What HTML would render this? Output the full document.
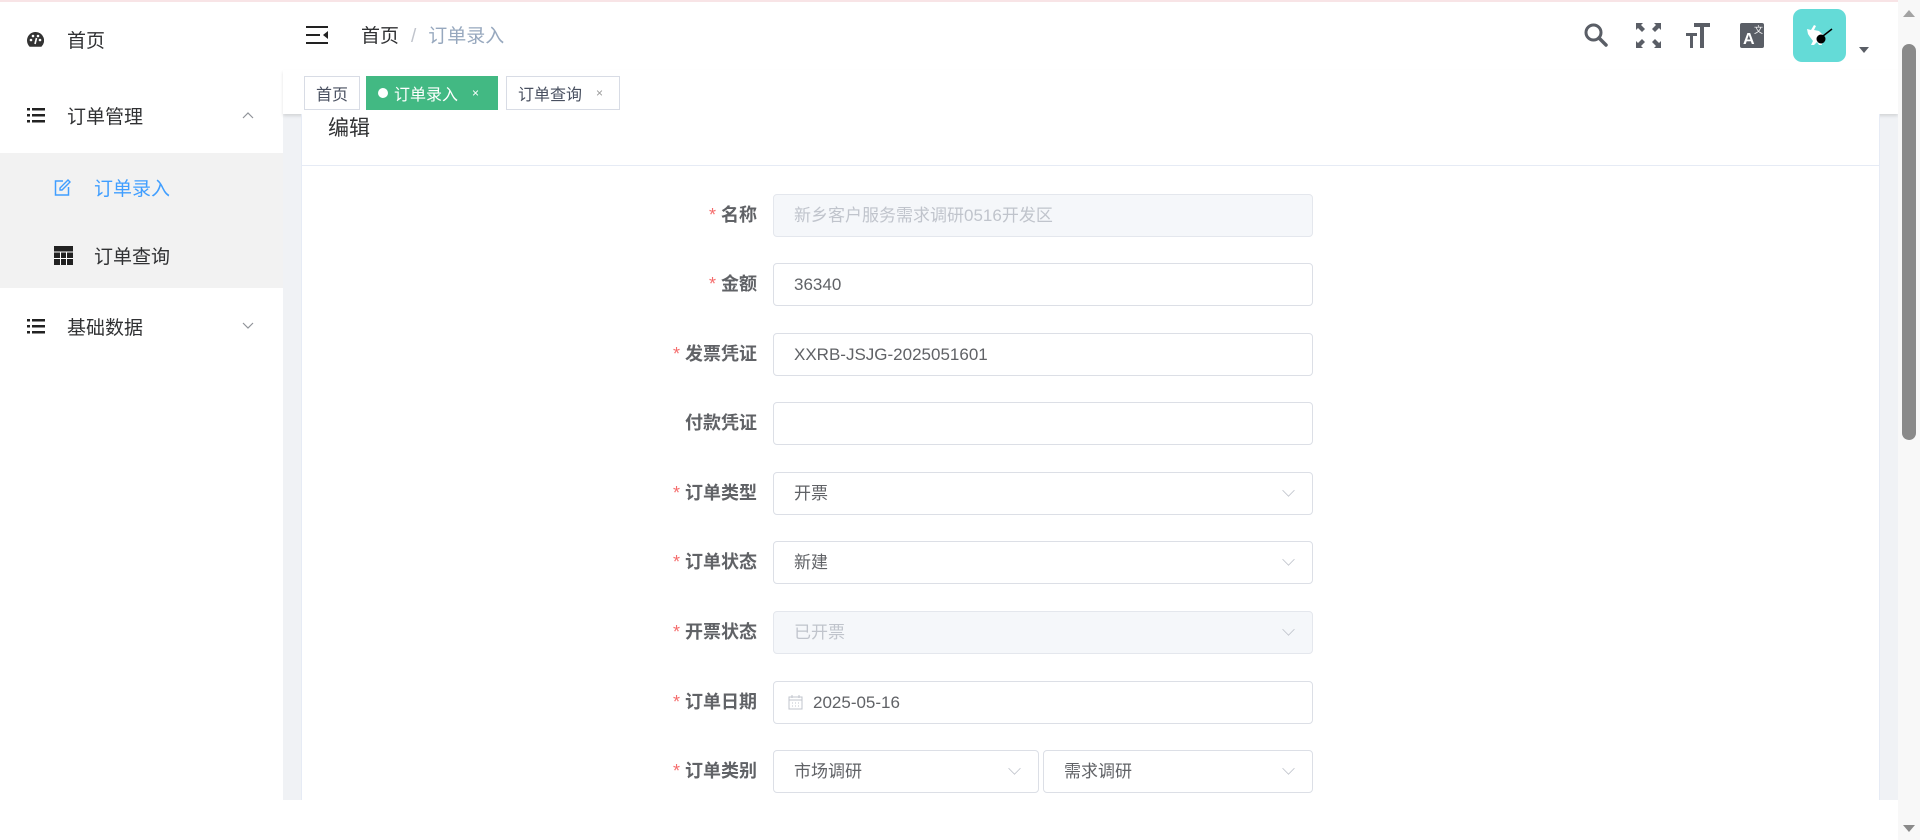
<!DOCTYPE html>
<html><head><meta charset="utf-8"><style>
*{box-sizing:border-box;margin:0;padding:0}
body{width:1920px;height:840px;overflow:hidden;background:#fff;font-family:"Liberation Sans","Noto Sans CJK SC",sans-serif;position:relative;color:#303133}
.pink{position:absolute;left:0;top:0;width:1920px;height:2px;background:#f8e4e6}
.side{position:absolute;left:0;top:2px;width:283px;height:838px;background:#fff}
.mi{position:absolute;left:0;width:283px;font-size:19px;color:#303133;display:flex;align-items:center}
.sub{position:absolute;left:0;top:151px;width:283px;height:135px;background:#f2f2f2}
.main{position:absolute;left:283px;top:2px;width:1615px;height:798px;background:#f0f2f5}
.hdr{position:absolute;left:283px;top:2px;width:1615px;height:68px;background:#fff}
.tags{position:absolute;left:283px;top:70px;width:1615px;height:44px;background:#fff;box-shadow:0 2px 3px rgba(0,0,0,.12)}
.tag{position:absolute;top:6px;height:34px;border:1px solid #d8dce5;font-size:16px;color:#495060;display:flex;align-items:center;padding-left:11px;background:#fff}
.card{position:absolute;left:301px;top:114px;width:1579px;height:686px;background:#fff;border-left:1px solid #e6ebf5;border-right:1px solid #e6ebf5}
.ttl{position:absolute;left:27px;top:0;font-size:21px;color:#303133;line-height:28px}
.div{position:absolute;left:0;top:51px;width:100%;height:1px;background:#e6ebf5}
.lbl{position:absolute;right:1163px;width:200px;text-align:right;font-size:18px;font-weight:bold;color:#606266;height:43px;line-height:43px}
.lbl b{color:#f56c6c;font-weight:normal;margin-right:5px}
.inp{position:absolute;left:773px;width:540px;height:43px;border:1px solid #dcdfe6;border-radius:4px;font-size:17px;color:#606266;line-height:41px;padding-left:20px;background:#fff}
.dis{background:#f5f7fa;border-color:#e4e7ed;color:#c0c4cc}
.arr{position:absolute;right:18px;top:12px;width:11px;height:11px;border-right:1.5px solid #c0c4cc;border-bottom:1.5px solid #c0c4cc;transform:rotate(45deg) scale(.8)}
.sb{position:absolute;left:1898px;top:0;width:22px;height:840px;background:#f8f8f8}
</style></head><body>
<div class="pink"></div>
<div class="main"></div>
<div class="side">
  <div class="mi" style="top:18px;height:38px">
    <svg style="position:absolute;left:27px" width="17" height="15" viewBox="0 0 17 15"><path d="M8.5 0A8.5 8.5 0 0 0 0 8.5c0 2.5 1 4.6 2.6 6.2h11.8A8.5 8.5 0 0 0 8.5 0z" fill="#333"/><circle cx="4" cy="8" r="1.3" fill="#fff"/><circle cx="6" cy="4" r="1.3" fill="#fff"/><circle cx="11" cy="4" r="1.3" fill="#fff"/><circle cx="13" cy="8" r="1.3" fill="#fff"/><path d="M9.5 6L8 12" stroke="#fff" stroke-width="1.6"/></svg>
    <span style="position:absolute;left:67px">首页</span></div>
  <div class="mi" style="top:94px;height:38px">
    <svg style="position:absolute;left:27px" width="18" height="16" viewBox="0 0 18 16"><g fill="#222"><rect x="0" y="1" width="3" height="2.5"/><rect x="5" y="1" width="13" height="2.5"/><rect x="0" y="7" width="3" height="2.5"/><rect x="5" y="7" width="13" height="2.5"/><rect x="0" y="13" width="3" height="2.5"/><rect x="5" y="13" width="13" height="2.5"/></g></svg>
    <span style="position:absolute;left:67px">订单管理</span>
    <svg style="position:absolute;left:242px" width="12" height="8" viewBox="0 0 12 8"><path d="M1 7l5-5 5 5" stroke="#909399" fill="none" stroke-width="1.2"/></svg></div>
  <div class="sub"></div>
  <div class="mi" style="top:166px;height:38px;color:#409eff">
    <svg style="position:absolute;left:54px" width="17" height="17" viewBox="0 0 17 17"><path d="M9 2H1.5v14h13V8" stroke="#409eff" fill="none" stroke-width="1.5"/><path d="M14 1l2 2-8 8H6V9z" stroke="#409eff" fill="none" stroke-width="1.4"/></svg>
    <span style="position:absolute;left:94px">订单录入</span></div>
  <div class="mi" style="top:234px;height:38px">
    <svg style="position:absolute;left:54px" width="19" height="19" viewBox="0 0 19 19"><rect width="19" height="19" fill="#222"/><path d="M0 6h19M0 12.5h19M6.5 6v13M12.5 6v13" stroke="#fff" stroke-width="1"/></svg>
    <span style="position:absolute;left:94px">订单查询</span></div>
  <div class="mi" style="top:305px;height:38px">
    <svg style="position:absolute;left:27px" width="18" height="16" viewBox="0 0 18 16"><g fill="#222"><rect x="0" y="1" width="3" height="2.5"/><rect x="5" y="1" width="13" height="2.5"/><rect x="0" y="7" width="3" height="2.5"/><rect x="5" y="7" width="13" height="2.5"/><rect x="0" y="13" width="3" height="2.5"/><rect x="5" y="13" width="13" height="2.5"/></g></svg>
    <span style="position:absolute;left:67px">基础数据</span>
    <svg style="position:absolute;left:242px" width="12" height="8" viewBox="0 0 12 8"><path d="M1 1l5 5 5-5" stroke="#909399" fill="none" stroke-width="1.2"/></svg></div>
</div>
<div class="hdr">
  <svg style="position:absolute;left:23px;top:24px" width="22" height="18" viewBox="0 0 22 18"><g fill="#222"><rect x="0" y="0" width="22" height="2"/><rect x="0" y="8" width="14" height="2"/><rect x="0" y="16" width="22" height="2"/><path d="M22 5v8l-5-4z"/></g></svg>
  <div style="position:absolute;left:78px;top:19px;font-size:19px;color:#303133">首页<span style="color:#c0c4cc;margin:0 12px">/</span><span style="color:#97a8be">订单录入</span></div>
  <svg style="position:absolute;left:1300px;top:20px" width="26" height="26" viewBox="0 0 26 26"><circle cx="10.5" cy="10.5" r="7.5" stroke="#5a5e66" stroke-width="3" fill="none"/><path d="M16 16l7 7" stroke="#5a5e66" stroke-width="3.5" stroke-linecap="round"/></svg>
  <svg style="position:absolute;left:1353px;top:21px" width="25" height="25" viewBox="0 0 25 25"><g fill="#5a5e66"><path d="M0 0h7l-2 2 4 4-3 3-4-4-2 2zM25 0v7l-2-2-4 4-3-3 4-4-2-2zM0 25v-7l2 2 4-4 3 3-4 4 2 2zM25 25h-7l2-2-4-4 3-3 4 4 2-2z"/></g></svg>
  <svg style="position:absolute;left:1403px;top:21px" width="24" height="25" viewBox="0 0 24 25"><g fill="#5a5e66"><rect x="8" y="0" width="16" height="4"/><rect x="14" y="0" width="4" height="25"/><rect x="0" y="10" width="11" height="3"/><rect x="4" y="10" width="3" height="15"/></g></svg>
  <svg style="position:absolute;left:1457px;top:21px" width="24" height="25" viewBox="0 0 24 25"><rect width="24" height="25" rx="2" fill="#5a5e66"/><text x="3" y="21" font-size="16" font-weight="bold" fill="#fff" font-family="Liberation Sans">A</text><text x="14" y="10" font-size="9" fill="#fff" font-family="Noto Sans CJK SC">文</text></svg>
  <div style="position:absolute;left:1510px;top:7px;width:53px;height:53px;border-radius:9px;background:#64dbd7">
    <svg width="53" height="53" viewBox="0 0 53 53"><path d="M14 20l4 1 3-5 2 1-2 4 5 1 4 4-2 6 1 4h-3l-2-3-3 3h-3l2-4-3-4-2-3z" fill="#fff"/><circle cx="28" cy="30" r="4.5" fill="#000"/><path d="M30 27l9-7" stroke="#000" stroke-width="1.5"/></svg></div>
  <svg style="position:absolute;left:1576px;top:45px" width="10" height="6" viewBox="0 0 10 6"><path d="M0 0h10L5 6z" fill="#5a5e66"/></svg>
</div>
<div class="tags">
  <div class="tag" style="left:21px;width:56px">首页</div>
  <div class="tag" style="left:83px;width:132px;background:#42b983;border-color:#42b983;color:#fff"><span style="width:10px;height:10px;border-radius:50%;background:#fff;margin-right:6px"></span>订单录入<span style="font-size:12px;margin-left:14px">×</span></div>
  <div class="tag" style="left:223px;width:114px">订单查询<span style="font-size:12px;margin-left:14px;color:#999">×</span></div>
</div>
<div class="card"><div class="ttl" style="top:1px;left:26px">编辑</div><div class="div"></div></div>

<div class="lbl" style="top:194px"><b>*</b>名称</div>
<div class="inp dis" style="top:194px">新乡客户服务需求调研0516开发区</div>
<div class="lbl" style="top:263px"><b>*</b>金额</div>
<div class="inp" style="top:263px">36340</div>
<div class="lbl" style="top:333px"><b>*</b>发票凭证</div>
<div class="inp" style="top:333px">XXRB-JSJG-2025051601</div>
<div class="lbl" style="top:402px">付款凭证</div>
<div class="inp" style="top:402px"></div>
<div class="lbl" style="top:472px"><b>*</b>订单类型</div>
<div class="inp" style="top:472px">开票<span class="arr"></span></div>
<div class="lbl" style="top:541px"><b>*</b>订单状态</div>
<div class="inp" style="top:541px">新建<span class="arr"></span></div>
<div class="lbl" style="top:611px"><b>*</b>开票状态</div>
<div class="inp dis" style="top:611px">已开票<span class="arr"></span></div>
<div class="lbl" style="top:681px"><b>*</b>订单日期</div>
<div class="inp" style="top:681px;padding-left:14px"><svg width="15" height="15" viewBox="0 0 15 15" style="vertical-align:-2px;margin-right:10px"><rect x="1" y="2" width="13" height="12" fill="none" stroke="#c0c4cc"/><path d="M1 5h13M4 0v3M11 0v3M4 8h1M7 8h1M10 8h1M4 11h1M7 11h1M10 11h1" stroke="#c0c4cc"/></svg>2025-05-16</div>
<div class="lbl" style="top:750px"><b>*</b>订单类别</div>
<div class="inp" style="top:750px;width:266px">市场调研<span class="arr"></span></div>
<div class="inp" style="top:750px;left:1043px;width:270px">需求调研<span class="arr"></span></div>

<div class="sb"><svg style="position:absolute;left:5px;top:10px" width="12" height="7" viewBox="0 0 12 7"><path d="M0 7h12L6 0z" fill="#a3a3a3"/></svg>
<div style="position:absolute;left:4px;top:44px;width:14px;height:396px;border-radius:7px;background:#8a8a8a"></div>
<svg style="position:absolute;left:5px;top:825px" width="12" height="7" viewBox="0 0 12 7"><path d="M0 0h12L6 7z" fill="#8a8a8a"/></svg></div>
</body></html>
